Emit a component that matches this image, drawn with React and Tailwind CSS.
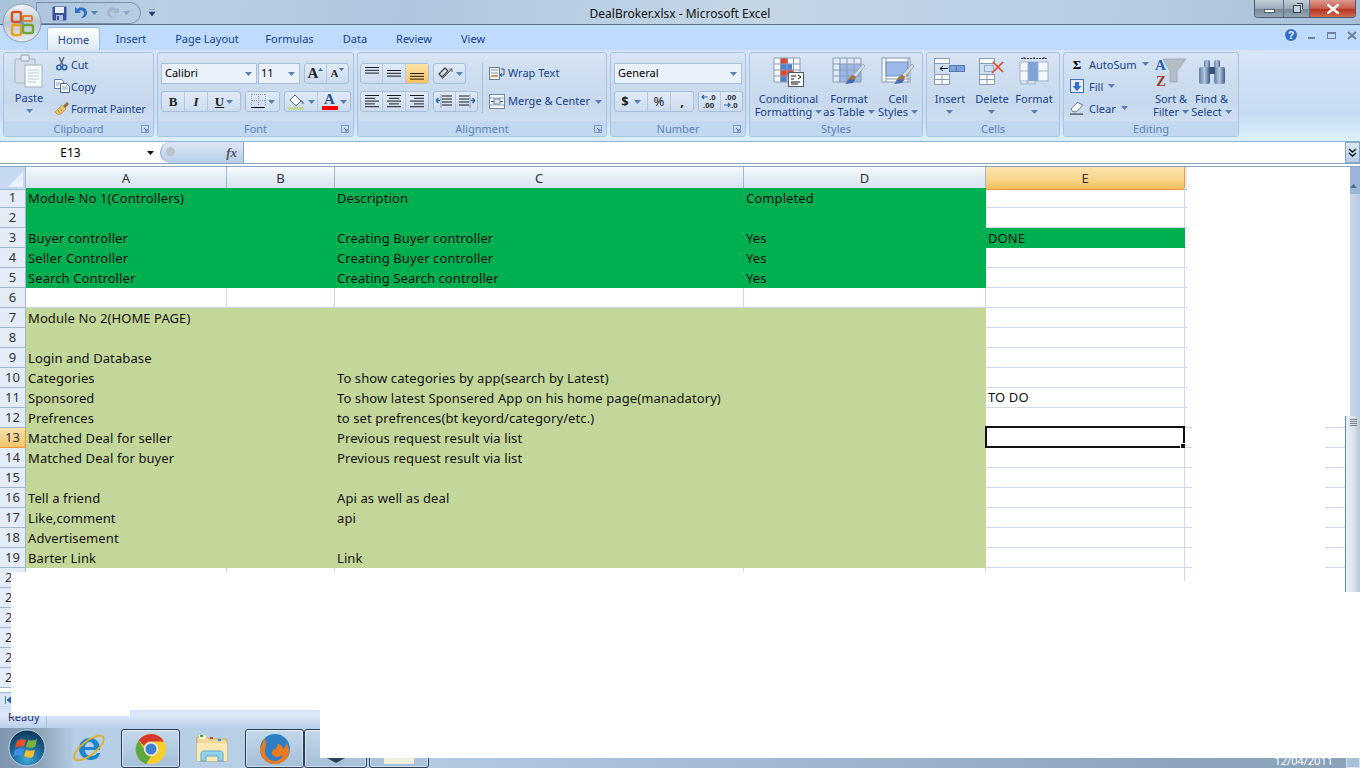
import React from 'react';

const SANS = "font-['Noto_Sans','Liberation_Sans',sans-serif]";

const rows = [
  [1, 'g', 'Module No 1(Controllers)', 'Description', 'Completed', ''],
  [2, 'g', '', '', '', ''],
  [3, 'g', 'Buyer controller', 'Creating Buyer controller', 'Yes', 'DONE'],
  [4, 'g', 'Seller Controller', 'Creating Buyer controller', 'Yes', ''],
  [5, 'g', 'Search Controller', 'Creating Search controller', 'Yes', ''],
  [6, '', '', '', '', ''],
  [7, 'l', 'Module No 2(HOME PAGE)', '', '', ''],
  [8, 'l', '', '', '', ''],
  [9, 'l', 'Login and Database', '', '', ''],
  [10, 'l', 'Categories', 'To show categories by app(search by Latest)', '', ''],
  [11, 'l', 'Sponsored', 'To show latest Sponsered App on his home page(manadatory)', '', 'TO DO'],
  [12, 'l', 'Prefrences', 'to set prefrences(bt keyord/category/etc.)', '', ''],
  [13, 'l', 'Matched Deal for seller', 'Previous request result via list', '', ''],
  [14, 'l', 'Matched Deal for buyer', 'Previous request result via list', '', ''],
  [15, 'l', '', '', '', ''],
  [16, 'l', 'Tell a friend', 'Api as well as deal', '', ''],
  [17, 'l', 'Like,comment', 'api', '', ''],
  [18, 'l', 'Advertisement', '', '', ''],
  [19, 'l', 'Barter Link', 'Link', '', ''],
  [20, '', '', '', '', ''],
  [21, '', '', '', '', ''],
  [22, '', '', '', '', ''],
  [23, '', '', '', '', ''],
  [24, '', '', '', '', ''],
  [25, '', '', '', '', ''],
];

function Caret({ className = '' }) {
  return (
    <svg width="7" height="4" viewBox="0 0 7 4" className={className}>
      <path d="M0 0h7L3.500 4z" fill="#5a7fb2" />
    </svg>
  );
}

// --- quick access / window icons
function OfficeOrb() {
  return (
    <svg width="40" height="40" viewBox="0 0 40 40">
      <defs>
        <linearGradient id="orb" x1="0" y1="0" x2="0" y2="1">
          <stop offset="0" stopColor="#f4f6f8" />
          <stop offset="0.5" stopColor="#b9c6d3" />
          <stop offset="1" stopColor="#e8edf2" />
        </linearGradient>
      </defs>
      <circle cx="20" cy="20" r="19" fill="url(#orb)" stroke="#8b9cae" />
      <rect x="10" y="9" width="9" height="10" rx="2" fill="none" stroke="#d2541f" strokeWidth="2.500" />
      <rect x="21" y="13" width="9" height="5" rx="1" fill="none" stroke="#e0802a" strokeWidth="2" />
      <rect x="10" y="22" width="9" height="10" rx="2" fill="none" stroke="#eaa221" strokeWidth="2.500" />
      <rect x="21" y="22" width="10" height="8" rx="2" fill="none" stroke="#6fa63c" strokeWidth="2.500" />
      <circle cx="20" cy="20" r="2" fill="#5d9bd5" />
    </svg>
  );
}

function SaveIcon() {
  return (
    <svg width="15" height="15" viewBox="0 0 15 15">
      <rect x="0.500" y="0.500" width="14" height="14" rx="1" fill="#3a4fa0" />
      <rect x="3" y="1" width="9" height="6" fill="#e8eef8" />
      <rect x="4" y="9" width="7" height="5.500" fill="#b7c2d8" />
      <rect x="5" y="10" width="2" height="4" fill="#3a4fa0" />
    </svg>
  );
}

function UndoIcon({ color = '#2f6fc0', flip }) {
  return (
    <svg width="14" height="14" viewBox="0 0 14 14" className={flip ? '-scale-x-100' : ''}>
      <path d="M1 1v6h6L5 5c2-1.500 5-.5 5 2 0 2-1 3.500-3 5 4 0 6-2.500 6-5.500C13 2 7 0 3.500 3z" fill={color} />
    </svg>
  );
}

function WinControls() {
  return (
    <div className="absolute right-[4px] top-0 flex h-[18px] w-[102px] overflow-hidden rounded-b-[4px] border border-t-0 border-[#4b5c6e]">
      <div className="flex w-[29px] items-center justify-center border-r border-[#5f7185] bg-[linear-gradient(#c2ced9,#9aabba_50%,#76889a_51%,#93a6b8)]">
        <div className="mt-[5px] h-[4px] w-[11px] border border-[#50606f] bg-white" />
      </div>
      <div className="flex w-[26px] items-center justify-center border-r border-[#5f7185] bg-[linear-gradient(#c2ced9,#9aabba_50%,#76889a_51%,#93a6b8)]">
        <div className="relative h-[8px] w-[8px] border border-[#33404d] bg-[#c8d4de] shadow-[2px_-2px_0_-1px_#d6dfe7,3px_-3px_0_-1px_#33404d]" />
      </div>
      <div className="flex flex-1 items-center justify-center bg-[linear-gradient(#dc9a8d,#c75c4c_50%,#b32e1d_51%,#cf6a52)]">
        <svg width="12" height="10" viewBox="0 0 12 10">
          <path d="M1 1l10 8M11 1L1 9" stroke="#fff" strokeWidth="2.600" strokeLinecap="square" />
        </svg>
      </div>
    </div>
  );
}

// --- clipboard icons
function PasteIcon() {
  return (
    <svg width="30" height="34" viewBox="0 0 30 34">
      <rect x="1" y="5" width="20" height="24" rx="1" fill="#d3dde9" stroke="#a6b4c4" />
      <rect x="7" y="1" width="8" height="6" rx="1" fill="#e8edf3" stroke="#8e9fb2" />
      <rect x="11" y="11" width="17" height="22" fill="#f6f9fc" stroke="#a3b1c2" />
      <path d="M14 16h11M14 19h11M14 22h11M14 25h11M14 28h8" stroke="#c3ced9" />
    </svg>
  );
}

function CutIcon() {
  return (
    <svg width="12" height="14" viewBox="0 0 12 14">
      <path d="M3 0l4 8M8 0L4.500 8" stroke="#58677a" strokeWidth="1.400" />
      <circle cx="3" cy="10.500" r="2.200" fill="none" stroke="#2c5fb0" strokeWidth="1.500" />
      <circle cx="8.500" cy="10.500" r="2.200" fill="none" stroke="#2c5fb0" strokeWidth="1.500" />
    </svg>
  );
}

function CopyIcon() {
  return (
    <svg width="16" height="14" viewBox="0 0 16 14">
      <path d="M.5.500h7l2 2v7h-9z" fill="#fff" stroke="#5b7fae" />
      <path d="M6.500 4.500h6l3 3v6h-9z" fill="#fff" stroke="#3e66a3" />
      <path d="M2 4h4M2 6h3M8 8h6M8 10h6" stroke="#7f9cc4" />
    </svg>
  );
}

function PainterIcon() {
  return (
    <svg width="16" height="14" viewBox="0 0 16 14">
      <path d="M9 5l4-4 2 2-4 4z" fill="#8c6d3f" />
      <path d="M1 11l7-7 4 4-5 5c-2 1-5 0-6-2z" fill="#e9c46b" stroke="#b08a36" strokeWidth="0.700" />
      <path d="M4 9l2 3M6 7l2 3" stroke="#b08a36" strokeWidth="0.700" />
    </svg>
  );
}

// --- font and alignment icons
function BordersIcon() {
  return (
    <svg width="15" height="15" viewBox="0 0 15 15">
      <path d="M1 .5h13M1 6.500h13M.5 0v12M7.500 0v12M14.500 0v12" stroke="#8a97a8" strokeDasharray="1 1" />
      <path d="M0 13.500h14" stroke="#111" strokeWidth="1.200" />
    </svg>
  );
}

function FillIcon() {
  return (
    <svg width="18" height="16" viewBox="0 0 18 16">
      <path d="M7 1l6 6-5 5-6-6z" fill="#f4f6f8" stroke="#58616d" />
      <path d="M13 6c2 1 3 3 2.500 4.500C14.500 10 13 8 13 6z" fill="#2e66b6" />
      <rect x="0" y="13" width="16" height="3" fill="#c4d79b" />
    </svg>
  );
}

function ColorAIcon() {
  return (
    <span className="flex w-[16px] flex-col items-center">
      <span className="font-['Liberation_Serif',serif] text-[15px] font-bold leading-[12px] text-[#2b4f8a]">A</span>
      <span className="mt-[1px] h-[4px] w-[16px] bg-[#ff0000]" />
    </span>
  );
}

function LinesIcon({ mode = 'left', offset = 0, short }) {
  const widths = [14, mode === 'vert' ? 14 : 10, 14, mode === 'vert' ? 14 : 10, 14];
  const list = short ? [14, 14, 14] : widths;
  return (
    <svg width="14" height="14" viewBox="0 0 14 14">
      {list.map((w, i) => {
        let x = 0;
        if (mode === 'center') x = (14 - w) / 2;
        if (mode === 'right') x = 14 - w;
        return <rect key={i} x={x} y={offset + i * 2.800} width={w} height="1" fill="#1d1d1d" />;
      })}
    </svg>
  );
}

function OrientIcon() {
  return (
    <svg width="17" height="15" viewBox="0 0 17 15">
      <path d="M2 8l6-6 3 3-6 6z" fill="none" stroke="#444" strokeWidth="1.300" />
      <path d="M5 13L15 3M12 3h3v3" fill="none" stroke="#555" />
    </svg>
  );
}

function IndentIcon({ right }) {
  return (
    <svg width="17" height="15" viewBox="0 0 17 15" className={right ? '-scale-x-100' : ''}>
      <path d="M6 2h10M6 5h10M6 8h10M6 11h10" stroke="#1d1d1d" />
      <path d="M5 .5v14" stroke="#555" strokeDasharray="1 1" />
      <path d="M4 6.500H0M2.500 4L0 6.500 2.500 9" fill="none" stroke="#2d62b2" strokeWidth="1.300" />
    </svg>
  );
}

function WrapIcon() {
  return (
    <svg width="16" height="15" viewBox="0 0 16 15">
      <rect x="0.500" y="1.500" width="10" height="12" fill="#f3f6fa" stroke="#6c7c90" />
      <path d="M2 4h7M2 7h7" stroke="#8a98aa" />
      <path d="M2 10h7" stroke="#c07a2c" strokeWidth="1.500" />
      <path d="M12 3h3v6h-3M13 7l-2 2 2 2" fill="none" stroke="#33558c" />
    </svg>
  );
}

function MergeIcon() {
  return (
    <svg width="16" height="15" viewBox="0 0 16 15">
      <rect x="0.500" y="0.500" width="15" height="14" fill="#f4f6f9" stroke="#75879c" />
      <path d="M1 4h14M1 11h14" stroke="#9aa9ba" />
      <path d="M2 7.500h3M11 7.500h3" stroke="#27508c" />
      <rect x="5" y="5" width="6" height="5" fill="#dfe7f2" stroke="#7488a2" />
    </svg>
  );
}

function DecimalIcon({ more }) {
  return (
    <svg width="18" height="15" viewBox="0 0 18 15" className="font-['Liberation_Sans',sans-serif] text-[8px] font-bold">
      <text x={more ? 2 : 8} y="6" fill="#222">{more ? '.00' : '.0'}</text>
      <text x={more ? 8 : 2} y="14" fill="#222">{more ? '.0' : '.00'}</text>
      <path d={more ? 'M1 11h6M5 9l2 2-2 2' : 'M1 3h6M3 1L1 3l2 2'} fill="none" stroke="#2d62b2" strokeWidth="1.200" />
    </svg>
  );
}

function DialogMark() {
  return (
    <svg width="8" height="8" viewBox="0 0 8 8" className="absolute bottom-[3px] right-[4px]">
      <rect x="0.500" y="0.500" width="7" height="7" fill="none" stroke="#7f9bc2" />
      <path d="M3 3l3 3M6 4v2H4" fill="none" stroke="#56729d" />
    </svg>
  );
}

// --- big ribbon icons
function SheetGrid({ x = 0, y = 0, w = 26, h = 26, cols = 3, rows: r = 4 }) {
  const lines = [];
  for (let i = 0; i <= cols; i++) lines.push(<path key={'c' + i} d={`M${x + (i * w) / cols} ${y}v${h}`} stroke="#8c9cb0" />);
  for (let i = 0; i <= r; i++) lines.push(<path key={'r' + i} d={`M${x} ${y + (i * h) / r}h${w}`} stroke="#8c9cb0" />);
  return <g>{lines}</g>;
}

function Brush() {
  return (
    <g>
      <path d="M31 7l2 2-9 11-3-2z" fill="#d7dde5" stroke="#7d8895" strokeWidth="0.600" />
      <path d="M21 18l3 2-1 3-5 1-4 2c1-3 4-7 7-8z" fill="#9c7a44" />
      <path d="M18 22l5 1-2 3-8 1z" fill="#3f6cbd" />
    </g>
  );
}

function CondFormatIcon() {
  return (
    <svg width="32" height="30" viewBox="0 0 32 30">
      <rect x="1" y="1" width="26" height="24" fill="#f6f8fb" />
      <rect x="8" y="1" width="7" height="6" fill="#e8452d" />
      <rect x="8" y="7" width="11" height="6" fill="#4f81d0" />
      <rect x="8" y="13" width="13" height="6" fill="#e8452d" />
      <rect x="8" y="19" width="6" height="6" fill="#4f81d0" />
      <SheetGrid x={1} y={1} w={26} h={24} cols={4} rows={4} />
      <rect x="15.500" y="15.500" width="15" height="14" fill="#f9fbfd" stroke="#4c5865" />
      <path d="M18 19h5M25 18l3 2-3 2M18 22h3M18 25h9M18 27h7" fill="none" stroke="#111" />
    </svg>
  );
}

function FormatTableIcon() {
  return (
    <svg width="34" height="30" viewBox="0 0 34 30">
      <rect x="1" y="1" width="28" height="24" fill="#dfe8f4" />
      <rect x="7" y="7" width="22" height="18" fill="#9bb8ea" />
      <SheetGrid x={1} y={1} w={28} h={24} cols={4} rows={4} />
      <Brush />
    </svg>
  );
}

function CellStylesIcon() {
  return (
    <svg width="34" height="30" viewBox="0 0 34 30">
      <rect x="1" y="1" width="28" height="24" fill="#f4f7fb" stroke="#8c9cb0" />
      <rect x="5" y="5" width="22" height="14" fill="#9bb8ea" stroke="#7291c8" />
      <path d="M5 22h24M5 1v24M27 1v24" stroke="#8c9cb0" />
      <Brush />
    </svg>
  );
}

function InsertIcon() {
  return (
    <svg width="32" height="28" viewBox="0 0 32 28">
      <rect x="0.500" y="0.500" width="15" height="5" fill="#f6f8fb" stroke="#8c9cb0" />
      <path d="M.5 5.500v10" stroke="#8c9cb0" />
      <rect x="0.500" y="16.500" width="15" height="10" fill="#f6f8fb" stroke="#8c9cb0" />
      <path d="M8 16.500v10M.5 21.500h15" stroke="#8c9cb0" />
      <rect x="15.500" y="7.500" width="15" height="6" fill="#7ea3db" stroke="#5279b4" />
      <path d="M22.500 7.500v6" stroke="#5279b4" />
      <path d="M14 10.500H6M9 8l-3 2.500L9 13" fill="none" stroke="#1d1d1d" />
    </svg>
  );
}

function DeleteIcon() {
  return (
    <svg width="26" height="28" viewBox="0 0 26 28">
      <rect x="0.500" y="0.500" width="15" height="5" fill="#f6f8fb" stroke="#8c9cb0" />
      <rect x="0.500" y="16.500" width="15" height="10" fill="#f6f8fb" stroke="#8c9cb0" />
      <path d="M8 16.500v10M.5 21.500h15M.5 5.500v11" stroke="#8c9cb0" />
      <rect x="5.500" y="7.500" width="9" height="6" fill="none" stroke="#5279b4" strokeDasharray="1 1" />
      <path d="M14 4l10 10M24 4L13 15" stroke="#e2452a" strokeWidth="1.600" />
    </svg>
  );
}

function FormatCellsIcon() {
  return (
    <svg width="30" height="30" viewBox="0 0 30 30">
      <path d="M2 1.500h26M5 0v3M15 0v3M25 0v3" stroke="#334" strokeDasharray="2 1" />
      <rect x="1" y="5" width="28" height="19" fill="#f5f8fb" stroke="#a3b1c2" />
      <rect x="9" y="5" width="10" height="19" fill="#7ea3db" />
      <path d="M9 5v19M19 5v19M1 14h8M19 14h10" stroke="#a3b1c2" />
      <path d="M2 24v3h6v-3M9 24v3h7v-3" fill="#dbe3ec" stroke="#a3b1c2" />
    </svg>
  );
}

function SortIcon() {
  return (
    <svg width="32" height="30" viewBox="0 0 32 30">
      <path d="M8 2l23 0-9 12v11h-7V14z" fill="#b4bcc6" stroke="#8e98a4" strokeWidth="0.600" />
      <text x="0" y="13" fontFamily="Liberation Serif, serif" fontWeight="bold" fontSize="15" fill="#2d5eb2">A</text>
      <text x="1" y="29" fontFamily="Liberation Serif, serif" fontWeight="bold" fontSize="15" fill="#a13b2c">Z</text>
    </svg>
  );
}

function FindIcon() {
  return (
    <svg width="28" height="26" viewBox="0 0 28 26">
      <defs>
        <linearGradient id="bino" x1="0" y1="0" x2="1" y2="0">
          <stop offset="0" stopColor="#5f7ea8" />
          <stop offset="0.500" stopColor="#b6c8e0" />
          <stop offset="1" stopColor="#3d5a86" />
        </linearGradient>
      </defs>
      <rect x="6" y="1" width="6" height="8" rx="2" fill="url(#bino)" />
      <rect x="16" y="1" width="6" height="8" rx="2" fill="url(#bino)" />
      <rect x="1" y="8" width="11" height="17" rx="2" fill="url(#bino)" />
      <rect x="16" y="8" width="11" height="17" rx="2" fill="url(#bino)" />
      <rect x="11" y="8" width="6" height="7" fill="#36527c" />
    </svg>
  );
}

function AutoFillIcon() {
  return (
    <svg width="14" height="14" viewBox="0 0 14 14">
      <rect x="0.500" y="0.500" width="13" height="13" fill="#e3ecf8" stroke="#3b71c0" />
      <path d="M5 3h4v4h2.500L7 12 2.500 7H5z" fill="#2f6fd0" />
    </svg>
  );
}

function EraserIcon() {
  return (
    <svg width="15" height="14" viewBox="0 0 15 14">
      <path d="M1 8l7-7 6 3-7 7H3z" fill="#f4f6f9" stroke="#69727d" />
      <path d="M0 13.500h14" stroke="#111" />
    </svg>
  );
}

// --- ribbon pieces
function Group({ title, width, dialog, children }) {
  return (
    <div style={{ width }} className="flex h-[85px] flex-col overflow-hidden rounded-[3px] border border-[#a9c3e0] bg-[linear-gradient(#d8e5f4,#cfdff1_20%,#c8d9ed_60%,#d3e2f3)]">
      <div className="h-[68px] shrink-0">{children}</div>
      <div className="relative flex h-[15px] items-center justify-center bg-[#c1d8f0] text-[11px] leading-none text-[#5d83b8]">
        {title}
        {dialog && <DialogMark />}
      </div>
    </div>
  );
}

function Box({ children, className = '' }) {
  return (
    <div className={`flex h-[21px] items-center divide-x divide-[#b6c9e2] rounded-[3px] border border-[#a7bfdd] bg-[linear-gradient(#e0ebf8,#cbdbee)] ${className}`}>
      {children}
    </div>
  );
}

function Cell({ w, children, active }) {
  return (
    <div style={{ width: w }} className={`flex h-full items-center justify-center gap-[2px] ${active ? 'bg-[linear-gradient(#fde3a8,#fbc35f)]' : ''}`}>
      {children}
    </div>
  );
}

function SmallBtn({ icon, text, caret, iconW = 18, gap = 0 }) {
  return (
    <div className="flex h-[22px] items-center text-[11px] leading-none text-[#15428b]">
      <span style={{ width: iconW, marginRight: gap }} className="flex shrink-0 justify-center">{icon}</span>
      <span className="whitespace-nowrap">{text}</span>
      {caret && <Caret className="ml-[5px]" />}
    </div>
  );
}

function BigBtn({ icon, lines, width, caretBelow }) {
  return (
    <div style={{ width }} className="flex shrink-0 flex-col items-center text-[11px] leading-[13px] text-[#15428b]">
      <div className="flex h-[36px] items-center justify-center">{icon}</div>
      <div className="mt-[2px] flex flex-col items-center whitespace-nowrap">
        {lines.map((l, i) => (
          <span key={i} className="flex h-[13px] items-center">
            {l}
            {!caretBelow && i === lines.length - 1 && <Caret className="ml-[3px]" />}
          </span>
        ))}
        {caretBelow && <span className="flex h-[13px] items-center"><Caret /></span>}
      </div>
    </div>
  );
}

function Ribbon() {
  return (
    <div className="flex h-[92px] shrink-0 gap-[3px] border-b border-[#8fb0d6] bg-[linear-gradient(#d6e4f5,#c6dbf3_70%,#dcf0fb)] px-[3px] pt-[2px]">
      <Group title="Clipboard" width={151} dialog>
        <div className="flex h-full">
          <div className="ml-[2px] w-[46px] shrink-0 text-[#15428b]">
            <BigBtn width={46} icon={<PasteIcon />} lines={['Paste']} caretBelow />
          </div>
          <div className="ml-[1px] flex flex-col tracking-[-0.2px]">
            <SmallBtn icon={<CutIcon />} text="Cut" />
            <SmallBtn icon={<CopyIcon />} text="Copy" />
            <SmallBtn icon={<PainterIcon />} text="Format Painter" />
          </div>
        </div>
      </Group>

      <Group title="Font" width={197} dialog>
        <div className="flex flex-col gap-[7px] pl-[3px] pt-[10px]">
          <div className="flex">
            <div className="flex h-[21px] w-[96px] items-center justify-between border border-[#a7bfdd] bg-[#eaf1fb] pl-[3px] pr-[4px] text-[11px] text-black">
              Calibri <Caret />
            </div>
            <div className="ml-[1px] flex h-[21px] w-[42px] items-center justify-between border border-[#a7bfdd] bg-[#eaf1fb] pl-[2px] pr-[4px] text-[11px] text-black">
              11 <Caret />
            </div>
            <Box className="ml-[4px] font-['Liberation_Serif',serif] font-bold text-[#222]">
              <Cell w={22}>
                <span className="text-[15px] leading-none">A</span>
                <svg width="5" height="3" viewBox="0 0 5 3" className="-ml-[2px] mb-[8px]"><path d="M0 3h5L2.500 0z" fill="#3f6cb0" /></svg>
              </Cell>
              <Cell w={21}>
                <span className="text-[11px] leading-none">A</span>
                <svg width="5" height="3" viewBox="0 0 5 3" className="-ml-[1px] mb-[8px]"><path d="M0 0h5L2.500 3z" fill="#3f6cb0" /></svg>
              </Cell>
            </Box>
          </div>
          <div className="flex">
            <Box className="text-[#222]">
              <Cell w={23}><span className="font-['Liberation_Serif',serif] text-[13px] font-bold">B</span></Cell>
              <Cell w={23}><span className="font-['Liberation_Serif',serif] text-[13px] font-bold italic">I</span></Cell>
              <Cell w={32}>
                <span className="font-['Liberation_Serif',serif] text-[13px] font-bold underline">U</span>
                <Caret />
              </Cell>
            </Box>
            <Box className="ml-[4px]">
              <Cell w={33}><BordersIcon /><Caret /></Cell>
            </Box>
            <Box className="ml-[4px]">
              <Cell w={33}><FillIcon /><Caret /></Cell>
              <Cell w={32}><ColorAIcon /><Caret /></Cell>
            </Box>
          </div>
        </div>
      </Group>

      <Group title="Alignment" width={250} dialog>
        <div className="flex pl-[2px] pt-[10px]">
          <div className="flex flex-col gap-[7px]">
            <div className="flex">
              <Box>
                <Cell w={22}><LinesIcon short /></Cell>
                <Cell w={23}><LinesIcon short offset={3} /></Cell>
                <Cell w={22} active><LinesIcon short offset={6} /></Cell>
              </Box>
              <Box className="ml-[4px]">
                <Cell w={31}><OrientIcon /><Caret /></Cell>
              </Box>
            </div>
            <div className="flex">
              <Box>
                <Cell w={22}><LinesIcon mode="left" /></Cell>
                <Cell w={23}><LinesIcon mode="center" /></Cell>
                <Cell w={22}><LinesIcon mode="right" /></Cell>
              </Box>
              <Box className="ml-[4px]">
                <Cell w={22}><IndentIcon /></Cell>
                <Cell w={21}><IndentIcon right /></Cell>
              </Box>
            </div>
          </div>
          <div className="ml-[4px] h-[50px] w-px bg-[#a9bdd6]" />
          <div className="ml-[6px] flex flex-col gap-[7px]">
            <div className="flex h-[21px] items-center gap-[3px] text-[11px] text-[#15428b]"><WrapIcon /> Wrap Text</div>
            <div className="flex h-[21px] items-center gap-[3px] text-[11px] text-[#15428b]">
              <MergeIcon /> Merge &amp; Center <Caret className="ml-[2px]" />
            </div>
          </div>
        </div>
      </Group>

      <Group title="Number" width={136} dialog>
        <div className="flex flex-col gap-[7px] pl-[3px] pt-[10px]">
          <div className="flex h-[21px] w-[128px] items-center justify-between border border-[#a7bfdd] bg-[#eaf1fb] pl-[3px] pr-[4px] text-[11px] text-black">
            General <Caret />
          </div>
          <div className="flex">
            <Box className="text-[#222]">
              <Cell w={33}><span className="text-[13px] font-bold leading-none">$</span><Caret className="ml-[3px]" /></Cell>
              <Cell w={23}><span className="text-[13px] leading-none">%</span></Cell>
              <Cell w={22}><span className="text-[13px] font-bold leading-none">,</span></Cell>
            </Box>
            <Box className="ml-[4px]">
              <Cell w={22}><DecimalIcon /></Cell>
              <Cell w={21}><DecimalIcon more /></Cell>
            </Box>
          </div>
        </div>
      </Group>

      <Group title="Styles" width={174}>
        <div className="flex pl-[1px] pt-[1px]">
          <BigBtn width={75} icon={<CondFormatIcon />} lines={['Conditional', 'Formatting']} />
          <BigBtn width={46} icon={<FormatTableIcon />} lines={['Format', 'as Table']} />
          <BigBtn width={52} icon={<CellStylesIcon />} lines={['Cell', 'Styles']} />
        </div>
      </Group>

      <Group title="Cells" width={134}>
        <div className="flex pl-[2px] pt-[1px]">
          <BigBtn width={42} icon={<InsertIcon />} lines={['Insert']} caretBelow />
          <BigBtn width={42} icon={<DeleteIcon />} lines={['Delete']} caretBelow />
          <BigBtn width={42} icon={<FormatCellsIcon />} lines={['Format']} caretBelow />
        </div>
      </Group>

      <Group title="Editing" width={176}>
        <div className="flex">
          <div className="ml-[6px] w-[84px] shrink-0">
            <SmallBtn icon={<span className="font-['Liberation_Serif',serif] text-[13px] font-bold leading-none text-black">Σ</span>} text="AutoSum" caret iconW={14} gap={5} />
            <SmallBtn icon={<AutoFillIcon />} text="Fill" caret iconW={14} gap={5} />
            <SmallBtn icon={<EraserIcon />} text="Clear" caret iconW={14} gap={5} />
          </div>
          <div className="-ml-[3px] flex pt-[1px]">
            <BigBtn width={40} icon={<SortIcon />} lines={['Sort &', 'Filter']} />
            <BigBtn width={41} icon={<FindIcon />} lines={['Find &', 'Select']} />
          </div>
        </div>
      </Group>
    </div>
  );
}

function TitleBar() {
  return (
    <div className="relative flex h-[25px] shrink-0 items-center justify-center border-b border-[#5b6f86] bg-[linear-gradient(100deg,#a9c3dc,#b9cfe3_12%,#aec7de_30%,#c4d6e6_55%,#b8cee2_80%,#a7c0d8)] pt-[3px] text-[12px] text-[#111]">
      <div className="absolute left-[36px] top-[2px] flex h-[22px] w-[105px] items-center rounded-r-[12px] border border-[#7d90a6] pl-[15px]">
        <SaveIcon />
        <span className="ml-[7px]"><UndoIcon /></span>
        <Caret className="ml-[3px]" />
        <span className="ml-[8px]"><UndoIcon flip color="#9fb6cd" /></span>
        <Caret className="ml-[3px] opacity-50" />
      </div>
      <svg width="7" height="8" viewBox="0 0 7 8" className="absolute left-[149px] top-[9px]">
        <path d="M0 0h6M0 3h6L3 7z" fill="#27406b" stroke="#27406b" strokeWidth="0.600" />
      </svg>
      DealBroker.xlsx - Microsoft Excel
      <WinControls />
    </div>
  );
}

function TabStrip() {
  const tabs = [['Insert', 62], ['Page Layout', 90], ['Formulas', 75], ['Data', 56], ['Review', 62], ['View', 56]];
  return (
    <div className="relative flex h-[25px] shrink-0 items-end bg-[#bfdbff] pl-[47px] text-[11px] text-[#15428b]">
      <div className="flex h-[23px] w-[53px] items-center justify-center rounded-t-[3px] border border-b-0 border-[#9dbde0] bg-[linear-gradient(#fff,#dce9f7)] pt-[2px]">Home</div>
      {tabs.map(([t, w]) => (
        <div key={t} style={{ width: w }} className="flex h-[23px] items-center justify-center pt-[2px]">{t}</div>
      ))}
      <div className="absolute right-[3px] top-[3px] flex items-center">
        <svg width="14" height="14" viewBox="0 0 14 14">
          <circle cx="7" cy="7" r="6.500" fill="#2e6fd0" stroke="#dbe6f5" />
          <text x="7" y="11" textAnchor="middle" fontFamily="Liberation Sans, sans-serif" fontWeight="bold" fontSize="10" fill="#fff">?</text>
        </svg>
        <span className="ml-[10px] mt-[6px] h-[2px] w-[7px] bg-[#6f8298]" />
        <span className="ml-[12px] h-[7px] w-[9px] border border-t-2 border-[#6f8298]" />
        <svg width="10" height="9" viewBox="0 0 10 9" className="ml-[11px]">
          <path d="M1 1l8 7M9 1L1 8" stroke="#6f8298" strokeWidth="2" />
        </svg>
      </div>
    </div>
  );
}

function FormulaBar() {
  return (
    <div className="flex h-[25px] shrink-0 flex-col bg-white">
      <div className="flex h-[22px] shrink-0 border-b border-[#8aa3c0] pl-px">
        <div className="relative flex w-[159px] items-center justify-center pr-[20px] text-[12px] text-black">
          E13
          <svg width="7" height="4" viewBox="0 0 7 4" className="absolute right-[6px] top-[9px]"><path d="M0 0h7L3.500 4z" fill="#111" /></svg>
        </div>
        <div className="relative flex w-[84px] items-center justify-end rounded-l-[11px] border-x border-[#8aa3c0] bg-[linear-gradient(#dce7f5,#b5cde9)] pr-[6px] font-['Liberation_Serif',serif] text-[13px] font-bold italic leading-none text-[#555]">
          <span className="absolute left-[5px] top-[5px] h-[9px] w-[9px] rounded-full bg-[#b9c3cf]" />
          fx
        </div>
        <div className="flex-1" />
        <div className="flex w-[15px] items-center justify-center border border-[#8aa3c0] bg-[linear-gradient(#dce7f5,#b5cde9)]">
          <svg width="9" height="10" viewBox="0 0 9 10"><path d="M1 1l3.500 3L8 1M1 5l3.500 3L8 5" fill="none" stroke="#111" strokeWidth="1.500" /></svg>
        </div>
      </div>
      <div className="flex-1 border-b border-[#8aa3c0]" />
    </div>
  );
}

const COLS = 'grid-cols-[26px_201px_108px_409px_242px_199px_1fr]';
const LINE = 'border-r border-b border-[#d0d7e5]';

function DataCell({ fill, children }) {
  const bg = fill === 'g' ? 'bg-[#00b050]' : fill === 'l' ? 'bg-[#c4d79b]' : `bg-white ${LINE}`;
  return <div className={`flex items-center whitespace-nowrap pl-[2px] ${bg}`}>{children}</div>;
}

function Sheet() {
  return (
    <div className="flex h-[525px] shrink-0 bg-white">
      <div className="min-w-0 flex-1 overflow-hidden">
        <div className={`grid h-[21px] ${COLS} text-center text-[13px] text-[#333]`}>
          <div className="relative border-b border-r border-[#9eb6ce] bg-[#c5d9f1]">
            <svg width="15" height="15" viewBox="0 0 15 15" className="absolute bottom-[2px] right-[2px]"><path d="M15 0v15H0z" fill="#e9f0f9" /></svg>
          </div>
          {['A', 'B', 'C', 'D'].map((c) => (
            <div key={c} className="flex items-center justify-center border-b border-r border-[#9eb6ce] bg-[linear-gradient(#f9fbfd,#e4ecf6_50%,#d7e3f1)] pt-[2px]">{c}</div>
          ))}
          <div className="flex items-center justify-center border-b border-r border-[#f29536] bg-[linear-gradient(#fbe2ab,#f9d88f_50%,#f2bf5f)] pt-[2px]">E</div>
          <div className="border-b border-[#9eb6ce] bg-[#e4ecf7]" />
        </div>
        {rows.map(([n, fill, a, c, d, e]) => (
          <div key={n} className={`grid h-[20px] ${COLS} text-[13px] leading-none tracking-[0.1px] text-[#111]`}>
            <div className={`flex items-center justify-center border-b border-r tracking-normal text-[#333] ${n === 13 ? 'border-[#f29536] bg-[linear-gradient(#fbe2ab,#f2c56b)]' : 'border-[#9eb6ce] bg-[#e4ecf7]'}`}>{n}</div>
            <DataCell fill={fill}>{a}</DataCell>
            <DataCell fill={fill} />
            <DataCell fill={fill}>{c}</DataCell>
            <DataCell fill={fill}>{d}</DataCell>
            <div className={`relative flex items-center whitespace-nowrap pl-[2px] ${n === 3 ? 'bg-[#00b050]' : LINE}`}>
              {e}
              {n === 13 && (
                <div className="absolute -left-px -top-[2px] h-[22px] w-[200px] border-2 border-[#111]">
                  <span className="absolute -bottom-[3px] -right-[3px] h-[6px] w-[6px] border border-white bg-[#111]" />
                </div>
              )}
            </div>
            <div className="border-b border-[#d0d7e5]" />
          </div>
        ))}
      </div>
      <div className="flex w-[15px] shrink-0 flex-col border-l border-[#5f8ad0] bg-[linear-gradient(90deg,#eceff3,#e3e8ee_40%,#b9c8da)]">
        <div className="flex h-[27px] shrink-0 items-end justify-center bg-[#9ab6d8] pb-[6px]">
          <svg width="7" height="4" viewBox="0 0 7 4"><path d="M0 4h7L3.500 0z" fill="#4c6a90" /></svg>
        </div>
        <div className="h-[222px] shrink-0 bg-[linear-gradient(90deg,#d0dded,#b7cbe2)]" />
        <div className="flex h-[12px] shrink-0 flex-col items-center justify-center gap-px">
          <span className="h-px w-[7px] bg-[#77818d]" />
          <span className="h-px w-[7px] bg-[#77818d]" />
          <span className="h-px w-[7px] bg-[#77818d]" />
          <span className="h-px w-[7px] bg-[#77818d]" />
        </div>
      </div>
    </div>
  );
}

function StatusBars() {
  return (
    <>
      <div className="flex h-[14px] shrink-0 items-center border-t border-[#9eb6ce] bg-[#d8e5f5] pl-[5px]">
        <svg width="7" height="8" viewBox="0 0 7 8"><path d="M.5 0v8M7 0v8L2 4z" fill="#2f5fa8" stroke="#2f5fa8" strokeWidth="0.800" /></svg>
      </div>
      <div className="flex h-[22px] shrink-0 items-end border-t border-[#c2d8f2] bg-[linear-gradient(#cfe1f8,#dbe8f8_40%,#b9cfeb)] text-[11px] text-[#252f6e]">
        <div className="flex h-full w-[47px] items-end border-r border-[#a9c1df] pb-[6px] pl-[8px] leading-none">Ready</div>
      </div>
    </>
  );
}

// --- taskbar icons
function WindowsOrb() {
  return (
    <svg width="38" height="38" viewBox="0 0 38 38">
      <defs>
        <radialGradient id="win" cx="0.500" cy="0.800" r="0.800">
          <stop offset="0" stopColor="#3aa7d8" />
          <stop offset="0.600" stopColor="#1c5f8c" />
          <stop offset="1" stopColor="#0d3552" />
        </radialGradient>
      </defs>
      <circle cx="19" cy="19" r="18" fill="url(#win)" stroke="#b8d3e6" />
      <path d="M9 12c3-2 6-2 9-1l-2 7c-3-1-6-1-9 1z" fill="#e8502a" />
      <path d="M20 11c3 1 6 1 9-1l-2 8c-3 1-6 1-9 0z" fill="#7cb53a" />
      <path d="M7 21c3-2 6-2 9-1l-2 7c-3-1-6-1-9 1z" fill="#3c8fe0" />
      <path d="M18 21c3 1 6 1 9 0l-2 7c-3 1-6 1-9-1z" fill="#f5c12e" />
    </svg>
  );
}

// drawn rather than lettered, so the "e" mark is a shape of the logo
function IEIcon() {
  return (
    <svg width="34" height="34" viewBox="0 0 34 34">
      <path d="M7 18c0-7 5-11 11-11 6 0 10 4 10 12H13c0 4 3 6 6 6 3 0 5-1 6-3h3c-1 5-5 7-9 7-7 0-12-5-12-11zm6-2h9c0-3-2-5-4-5-3 0-5 2-5 5z" fill="#1a86cf" />
      <ellipse cx="17" cy="17" rx="18" ry="7" transform="rotate(-38 17 17)" fill="none" stroke="#e7ad27" strokeWidth="1.800" />
    </svg>
  );
}

function ChromeIcon() {
  return (
    <svg width="32" height="32" viewBox="0 0 32 32">
      <circle cx="16" cy="16" r="15" fill="#f5cf2e" />
      <path d="M16 1a15 15 0 0 1 13 7.500H16a7.500 7.500 0 0 0-7 4.500L3.800 7.500A15 15 0 0 1 16 1z" fill="#d8392c" />
      <path d="M3.800 7.500L9 16a7.500 7.500 0 0 0 7 7.500L11 31A15 15 0 0 1 3.800 7.500z" fill="#5fa83f" />
      <circle cx="16" cy="16" r="7" fill="#e8eef6" />
      <circle cx="16" cy="16" r="5.500" fill="#3f7fd0" />
    </svg>
  );
}

function FolderIcon() {
  return (
    <svg width="33" height="28" viewBox="0 0 33 28">
      <path d="M1 3h10l2 2h18v22H1z" fill="#efd99a" stroke="#c9ad63" />
      <path d="M3 1h7v4H3z" fill="#fff5d3" />
      <rect x="4" y="1" width="3" height="2" fill="#35a83a" />
      <rect x="14" y="3" width="3" height="2" fill="#c7472e" />
      <rect x="22" y="5" width="3" height="2" fill="#3b8fd8" />
      <path d="M1 9h30v18H1z" fill="#fbe9b4" />
      <path d="M5 27v-7c0-2 1-3 3-3h16c2 0 3 1 3 3v7h-5v-5H10v5z" fill="#8fd0ea" stroke="#5da7c9" />
    </svg>
  );
}

function FirefoxIcon() {
  return (
    <svg width="32" height="32" viewBox="0 0 32 32">
      <circle cx="16" cy="16" r="15" fill="#2f7fc6" />
      <path d="M6 5c-1 3-5 8-5 12 0 8 7 14 15 14 7 0 12-4 14-10 1-4-1-9-3-11 0 3-1 5-3 6 0-3-3-5-6-5 1 2 0 4-2 5-2 0-3 2-3 4s2 4 5 4c3 0 5-2 6-3-1 5-5 7-8 7-6 0-10-5-10-9 0-5 2-8 0-14z" fill="#ec7a1e" />
    </svg>
  );
}

function TaskButton({ width, children, className = '' }) {
  return (
    <div style={{ width }} className={`flex h-[39px] items-center justify-center rounded-[3px] border border-[#2c3d52] bg-[linear-gradient(#c3d8ea,#a4bfd8)] shadow-[inset_0_0_0_1px_rgba(255,255,255,0.500)] ${className}`}>
      {children}
    </div>
  );
}

function Taskbar() {
  return (
    <div className="relative flex h-[40px] shrink-0 items-end bg-[linear-gradient(90deg,#7f97af,#8fa3b8_40px,#b6cfe6_75px,#b8d0e6_320px,#8ba4bc_1200px,#8aa2ba)]">
      <div className="ml-[8px] flex h-[40px] w-[38px] items-center"><WindowsOrb /></div>
      <div className="ml-[26px] flex h-[40px] w-[34px] items-center"><IEIcon /></div>
      <TaskButton width={59} className="ml-[15px]"><ChromeIcon /></TaskButton>
      <div className="flex h-[40px] w-[65px] items-center justify-center"><FolderIcon /></div>
      <TaskButton width={59}><FirefoxIcon /></TaskButton>
      <TaskButton width={63} className="!items-end pb-[4px]">
        <svg width="22" height="6" viewBox="0 0 22 6"><path d="M0 0h22l-11 6z" fill="#2e3f60" /></svg>
      </TaskButton>
      <TaskButton width={60} className="ml-[2px] !items-end pb-[3px]">
        <span className="h-[7px] w-[30px] bg-[#efefdc]" />
      </TaskButton>
      <div className="absolute bottom-[3px] right-[27px] text-[11px] leading-[9px] text-white">12/04/2011</div>
      <div className="absolute bottom-0 right-0 h-[21px] w-[14px] border border-[#d4e2ef] bg-[#a8c0d8]" />
    </div>
  );
}

export default function App() {
  return (
    <div className={`relative flex h-[768px] w-[1360px] flex-col overflow-hidden bg-white ${SANS}`}>
      <TitleBar />
      <TabStrip />
      <Ribbon />
      <FormulaBar />
      <Sheet />
      <StatusBars />
      <Taskbar />

      {/* office button sits over the title bar and tab strip */}
      <div className="absolute left-[2px] top-[3px]"><OfficeOrb /></div>

      {/* white masks laid over the spreadsheet, as in the picture */}
      <div className="absolute left-[1187px] top-[167px] h-[249px] w-[163px] bg-white" />
      <div className="absolute left-[1192px] top-[416px] h-[176px] w-[133px] bg-white" />
      <div className="absolute left-[986px] top-[581px] h-[11px] w-[359px] bg-white" />
      <div className="absolute left-[11px] top-[572px] h-[20px] w-[975px] bg-white" />
      <div className="absolute left-[320px] top-[592px] h-[166px] w-[1040px] bg-white" />
      <div className="absolute left-[11px] top-[592px] h-[118px] w-[309px] bg-white" />
      <div className="absolute left-[11px] top-[710px] h-[6px] w-[119px] bg-white" />
    </div>
  );
}
